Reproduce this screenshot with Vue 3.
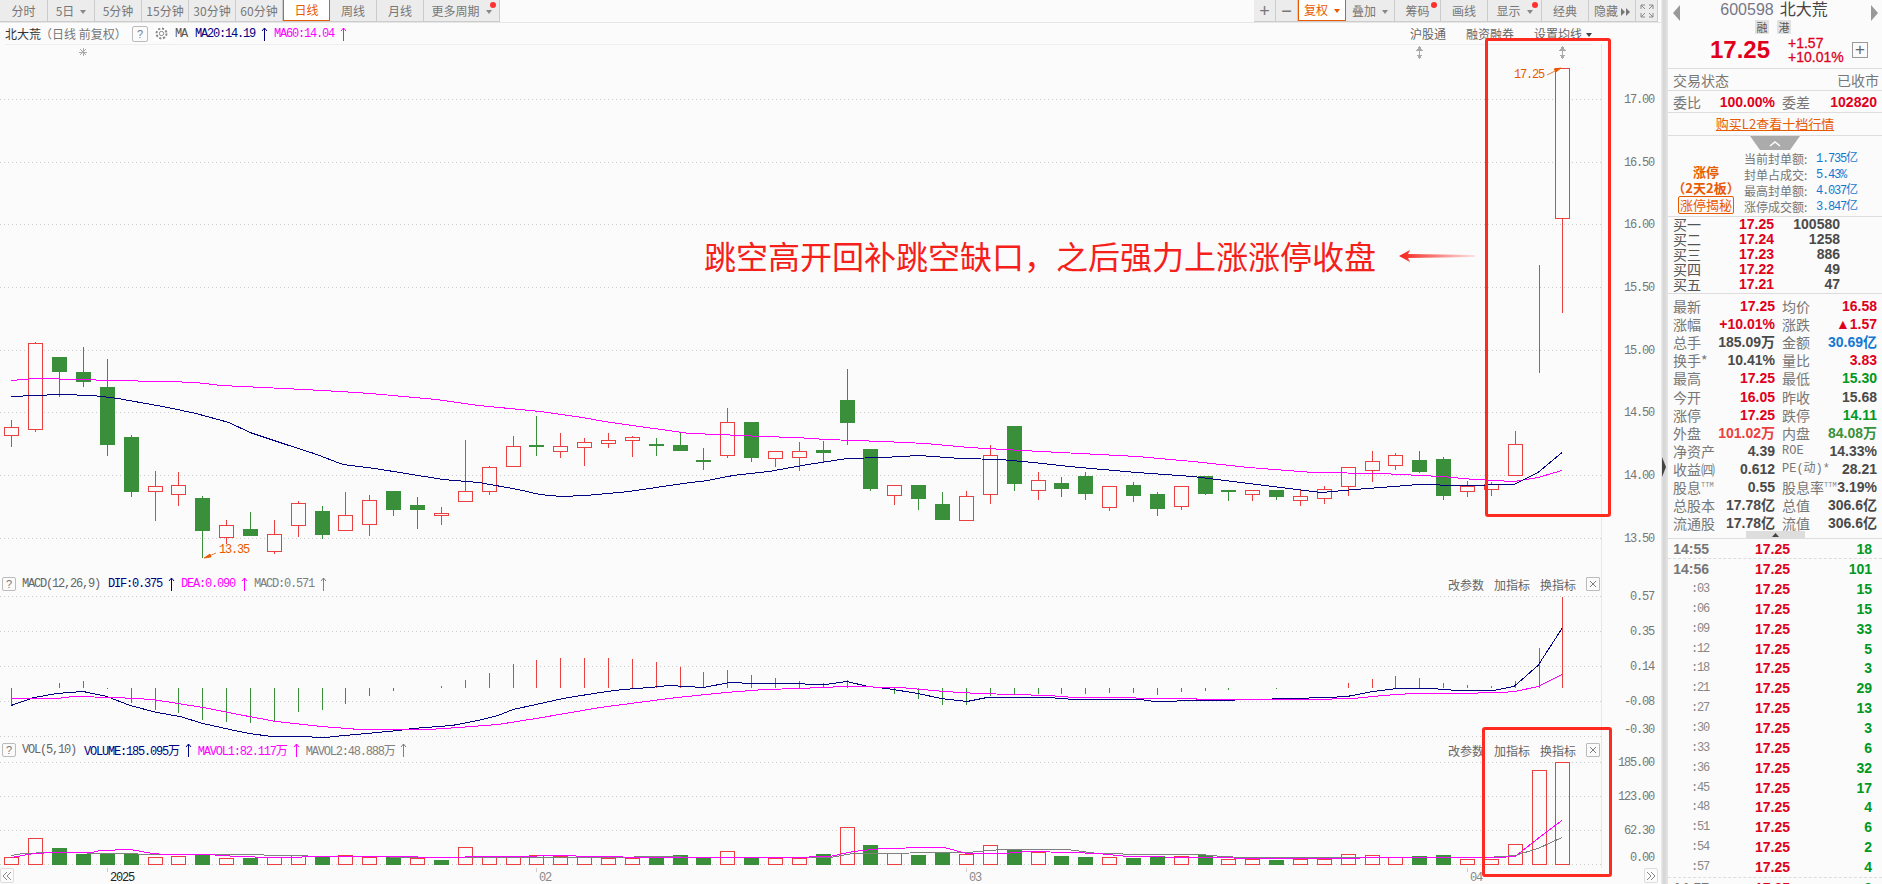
<script setup>
const RED = '#ec4040'
const GREEN = '#398f3a'
const slotX = (i) => Math.round(11.4 + 23.863 * i) + 0.5
const px = (v) => Math.round(v) + 0.5

// candle table: kind, high, top, bottom, low (page pixels)
const rawCandles = [
  ['u',419,427,435,446],['u',341,343,429,431],['d',357,357,371,396],['d',346,372,381,386],['d',358,387,444,455],
  ['d',434,437,491,496],['u',470,486,491,520],['u',471,485,494,505],['d',495,498,530,557],['u',519,525,537,543],
  ['d',511,529,535,535],['u',519,534,551,553],['u',500,503,525,536],['d',505,511,534,538],['u',491,515,530,530],
  ['u',494,500,524,535],['d',490,491,509,515],['d',496,505,509,528],['u',506,513,515,524],['u',439,491,501,501],
  ['u',465,467,491,494],['u',435,446,466,466],['d',415,445,446,455],['u',432,446,451,457],['u',437,442,447,465],
  ['u',432,440,443,447],['u',435,437,440,456],['d',437,444,445,455],['d',432,445,450,450],['d',447,460,461,469],
  ['u',407,422,455,457],['d',422,422,457,461],['u',451,451,458,466],['u',441,451,457,470],['d',440,450,452,461],
  ['d',368,400,422,444],['d',449,449,488,490],['u',484,485,495,504],['d',484,485,498,509],['d',491,504,519,519],
  ['u',490,496,520,520],['u',444,455,494,503],['d',426,426,483,490],['u',471,480,490,499],['d',476,483,488,496],
  ['d',471,476,493,499],['u',485,486,507,510],['d',481,485,495,501],['d',491,494,508,515],['u',486,486,506,509],
  ['d',476,476,493,494],['d',490,490,491,500],['u',489,490,494,500],['d',490,490,496,499],['u',489,496,500,505],
  ['u',485,489,498,503],['u',467,467,486,495],['u',450,461,470,481],['u',452,455,465,469],['d',450,460,471,472],
  ['d',456,459,495,499],['u',480,486,491,496],['u',481,484,489,495],['u',430,444,475,475],['u',264,264,264,372],
  ['u',68,68,218,312]
]

const candles = rawCandles.map(([kind, hi, top, bot, lo], i) => ({
  key: i,
  x: slotX(i),
  color: kind === 'u' ? RED : GREEN,
  up: kind === 'u',
  hi: px(hi),
  top: px(top),
  bot: px(bot),
  lo: px(lo),
  height: Math.max(px(bot) - px(top), 0)
}))

const toPoints = (rows) => rows.map(([x, y]) => `${x},${y + 0.5}`).join(' ')

const ma60 = toPoints([[11,380],[35,378],[84,379],[108,380],[167,381],[196,382],[221,385],[263,387],[304,389],[357,392],[382,394],[436,399],[479,405],[540,411],[576,416],[611,422],[654,428],[690,433],[719,434],[761,436],[797,437],[826,439],[883,441],[926,443],[969,447],[1022,450],[1080,453],[1137,456],[1193,461],[1249,467],[1313,472],[1381,473],[1441,476],[1475,479],[1514,481],[1538,477],[1562,470]])
const ma20 = toPoints([[11,396],[60,394],[93,395],[118,398],[168,407],[196,413],[229,422],[250,432],[286,444],[314,453],[343,464],[375,468],[443,479],[479,482],[518,489],[540,494],[561,496],[586,495],[629,491],[683,483],[708,480],[733,475],[769,471],[808,464],[847,458],[883,457],[919,455],[961,458],[1001,459],[1033,462],[1069,466],[1080,467],[1137,472],[1193,476],[1249,483],[1321,492],[1355,489],[1419,484],[1460,485],[1514,484],[1538,472],[1562,452]])

// values read from the 3x crops, turned back into page pixels
const sec = (x0, sx, rows) => rows.map(([x, z]) => [Math.round(x0 + x / sx), Math.round(570 + z / 3)])
const S1 = 2.613
const difLine = toPoints([
  ...sec(0, S1, [[30,405],[90,382],[150,370],[218,364],[280,378],[340,405],[410,425],[470,437],[530,458],[600,478],[650,490],[710,498],[780,498],[850,502],[900,496],[960,488],[1040,481],[1080,475],[1180,465],[1250,450],[1300,435],[1340,418],[1400,402],[1470,385]]),
  ...sec(600, S1, [[0,367],[60,356],[130,351],[180,346],[270,350],[340,337],[400,340],[480,340],[590,343],[645,333],[700,349],[750,355],[830,370],[890,385],[960,392],[1010,382],[1170,382],[1240,386],[1410,388],[1450,394],[1568,391]]),
  ...sec(1200, 3, [[48,390],[385,382],[440,378],[520,363],[590,355],[695,355],[770,360],[880,360],[943,348],[1015,285],[1087,175]])
])
const deaLine = toPoints([
  ...sec(0, S1, [[30,385],[150,383],[190,379],[300,380],[400,388],[530,412],[650,437],[720,452],[840,468],[940,478],[1120,478],[1200,472],[1300,462],[1400,445]]),
  ...sec(600, S1, [[0,411],[100,397],[200,382],[330,367],[430,358],[520,355],[640,349],[785,350],[900,362],[990,370],[1170,374],[1240,380],[1370,380],[1430,385],[1550,385]]),
  ...sec(1200, 3, [[0,388],[335,388],[460,383],[550,376],[640,370],[765,369],[905,367],[945,363],[1015,347],[1087,313]])
])
const macdBars = [405,353,338,333,357,400,420,430,450,456,459,452,426,420,402,378,363,353,347,330,308,282,270,264,264,264,267,276,291,306,300,315,324,333,339,330,355,372,387,405,405,378,375,372,372,372,369,369,375,366,362,360,355,357,355,353,339,327,318,324,339,345,348,333,235,82]
  .map((z, i) => ({ key: i, x: slotX(i), y: Math.round(570 + z / 3), color: z < 355 ? RED : GREEN }))
  .filter((b) => b.y !== 688)

const volBars = [
  [1,862],[1,805],[0,834],[0,852],[0,848],[0,852],[1,862],[1,858],[0,852],[1,865],[0,864],[1,862],[1,855],[0,860],[1,854],[1,860],[0,860],[1,865],[0,870],[1,832],[1,862],[1,860],[1,854],[1,858],[1,858],
  [1,865],[1,865],[0,862],[0,856],[0,860],[1,844],[0,860],[1,865],[1,865],[0,852],[1,772],[0,825],[1,850],[0,855],[0,846],[1,853],[1,826],[0,840],[1,847],[0,858],[0,861],[1,862],[0,864],[0,858],[1,859],
  [0,854],[1,868],[1,868],[0,870],[1,866],[1,866],[1,853],[1,856],[1,862],[0,858],[0,856],[1,866],[1,868],[1,823],[1,601],[1,577]
].map(([up, z], i) => ({ key: i, x: slotX(i), up: !!up, y: px(570 + z / 3), height: px(864) - px(570 + z / 3) }))

const volMa1 = toPoints([
  ...sec(0, S1, [[30,862],[90,850],[140,846],[240,845],[260,841],[340,838],[400,850],[430,853],[540,853],[620,858],[710,860],[870,859],[940,857],[1060,857],[1120,860],[1180,861],[1250,858],[1370,858],[1440,854]]),
  ...sec(600, S1, [[0,859],[120,862],[300,862],[490,860],[600,858],[660,842],[740,835],[860,830],[900,830],[960,848],[1050,848],[1120,842],[1230,845],[1300,850],[1380,858]]),
  ...sec(1200, 3, [[0,862],[195,864],[410,864],[550,860],[770,860],[890,860],[945,857],[1015,805],[1087,750]])
])
const volMa2 = toPoints([
  ...sec(0, S1, [[30,855],[60,850],[130,847],[320,848],[400,851],[680,852],[700,856],[1120,860],[1180,862],[1200,860]]),
  ...sec(600, S1, [[0,860],[180,857],[240,860],[490,862],[600,860],[660,850],[960,845],[1050,838],[1220,838],[1300,848],[1430,853]]),
  ...sec(1200, 3, [[0,853],[70,858],[125,862],[860,862],[945,856],[1015,835],[1087,802]])
])

const priceGrid = [
  [99.5,'17.00'],[162.5,'16.50'],[224.5,'16.00'],[287.5,'15.50'],[350.5,'15.00'],[412.5,'14.50'],[475.5,'14.00'],[538.5,'13.50']
]
const macdGrid = [[596.5,'0.57'],[631.5,'0.35'],[666.5,'0.14'],[701.5,'-0.08'],[736.5,'']]
const volGrid = [[762.5,'185.00'],[796.5,'123.00'],[830.5,'62.30'],[864.5,'']]
const dates = [
  { label: '2025', tick: 107.5, x: 110, dark: true },
  { label: '02', tick: 536.5, x: 539 },
  { label: '03', tick: 966.5, x: 969 },
  { label: '04', tick: 1467.5, x: 1470 }
]

const leftTools = [
  { t: '分时', w: 48 }, { t: '5日', w: 47, caret: true }, { t: '5分钟', w: 47 }, { t: '15分钟', w: 47 }, { t: '30分钟', w: 47 },
  { t: '60分钟', w: 47 }, { t: '日线', w: 47, on: true }, { t: '周线', w: 47 }, { t: '月线', w: 47 }, { t: '更多周期', w: 76, caret: true, dot: true }
]
const rightTools = [
  { t: '+', w: 22, sign: true }, { t: '−', w: 22, sign: true }, { t: '复权', w: 48, on: true, caret: true }, { t: '叠加', w: 49, caret: true }, { t: '筹码', w: 46, dot: true },
  { t: '画线', w: 47 }, { t: '显示', w: 54, caret: true, dot: true }, { t: '经典', w: 47 }, { t: '隐藏', w: 47, more: true }
]

const maHead = [
  { text: 'MA20:14.19', color: '#000080' },
  { text: 'MA60:14.04', color: '#ff00ff' }
]
const macdHead = [
  { text: 'DIF:0.375', color: '#000080' },
  { text: 'DEA:0.090', color: '#ff00ff' },
  { text: 'MACD:0.571', color: '#808080' }
]
const volHead = [
  { text: 'VOLUME:185.095万', color: '#000080' },
  { text: 'MAVOL1:82.117万', color: '#ff00ff' },
  { text: 'MAVOL2:48.888万', color: '#808080' }
]

const sealRows = [
  ['当前封单额:', '1.735亿'], ['封单占成交:', '5.43%'], ['最高封单额:', '4.037亿'], ['涨停成交额:', '3.847亿']
]
const buyRows = [
  ['买一', '17.25', '100580'], ['买二', '17.24', '1258'], ['买三', '17.23', '886'], ['买四', '17.22', '49'], ['买五', '17.21', '47']
]
const stats = [
  ['最新', '17.25', 'r', '均价', '16.58', 'r'],
  ['涨幅', '+10.01%', 'r', '涨跌', '▲1.57', 'r'],
  ['总手', '185.09万', 'k', '金额', '30.69亿', 'b'],
  ['换手*', '10.41%', 'k', '量比', '3.83', 'r'],
  ['最高', '17.25', 'r', '最低', '15.30', 'g'],
  ['今开', '16.05', 'r', '昨收', '15.68', 'k'],
  ['涨停', '17.25', 'r', '跌停', '14.11', 'g'],
  ['外盘', '101.02万', 'lr', '内盘', '84.08万', 'lg'],
  ['净资产', '4.39', 'k', 'ROE', '14.33%', 'k'],
  ['收益㈣', '0.612', 'k', 'PE(动)*', '28.21', 'k'],
  ['股息', '0.55', 'k', '股息率', '3.19%', 'k', true],
  ['总股本', '17.78亿', 'k', '总值', '306.6亿', 'k'],
  ['流通股', '17.78亿', 'k', '流值', '306.6亿', 'k']
]
const ticks = [
  ['14:56', 101], [':03', 15], [':06', 15], [':09', 33], [':12', 5], [':18', 3], [':21', 29], [':27', 13],
  [':30', 3], [':33', 6], [':36', 32], [':45', 17], [':48', 4], [':51', 6], [':54', 2], [':57', 4]
]
</script>

<template>
  <div class="app">
    <main class="main">
      <header class="toolbar">
        <div class="tool-group">
          <button
            v-for="b in leftTools"
            :key="b.t"
            class="tool"
            :class="{ on: b.on }"
            :style="{ width: b.w + 'px' }"
          >
            {{ b.t }}<i v-if="b.caret" class="caret"></i><i v-if="b.dot" class="dot"></i>
          </button>
        </div>
        <div class="tool-group">
          <button
            v-for="b in rightTools"
            :key="b.t"
            class="tool"
            :class="{ on: b.on, sign: b.sign }"
            :style="{ width: b.w + 'px' }"
          >
            {{ b.t }}<i v-if="b.caret" class="caret"></i><i v-if="b.dot" class="dot"></i>
            <svg v-if="b.more" class="more" width="9" height="8" viewBox="0 0 9 8" fill="#777"><path d="M0 0l4 4-4 4zM5 0l4 4-4 4z" /></svg>
          </button>
          <button class="tool expand">
            <svg width="14" height="14" viewBox="0 0 14 14" fill="none" stroke="#888">
              <path d="M1 5V1h4M13 5V1H9M1 9v4h4M13 9v4H9M1 1l4 4M13 1L9 5M1 13l4-4M13 13L9 9" />
            </svg>
          </button>
        </div>
      </header>

      <section class="panel price-panel">
        <svg class="canvas" viewBox="0 23 1661 549" width="1661" height="549">
          <g class="grid">
            <line v-for="g in priceGrid" :key="g[0]" x1="0" x2="1604" :y1="g[0]" :y2="g[0]" />
          </g>
          <line class="axis" x1="1601.5" x2="1601.5" y1="44" y2="572" />
          <text v-for="g in priceGrid" :key="g[1]" class="axis-label" x="1654" :y="g[0] + 3" text-anchor="end">{{ g[1] }}</text>
          <g v-for="c in candles" :key="c.key" :stroke="c.color" shape-rendering="crispEdges">
            <line :x1="c.x" :x2="c.x" :y1="c.hi" :y2="c.top" />
            <line :x1="c.x" :x2="c.x" :y1="c.bot" :y2="c.lo" />
            <rect v-if="c.up" :x="c.x - 7" :y="c.top" width="14" :height="c.height" fill="#fbfbfb" />
            <rect v-else :x="c.x - 7" :y="c.top" width="14" :height="c.height" :fill="c.color" />
          </g>
          <polyline class="ln" stroke="#ff00ff" :points="ma60" />
          <polyline class="ln" stroke="#000080" :points="ma20" />
          <g class="mark">
            <text x="1514" y="78">17.25</text>
            <path d="M1547 75l8-4M1561 68l-7 1 2 3z" />
            <text x="219" y="553">13.35</text>
            <path d="M216 553l-7 3M204 558l6-4 1 3z" />
          </g>
          <g class="pin">
            <path d="M1419.5 49v7M1417 50l2.5-3 2.5 3zM1417 55l2.5 3 2.5-3z" />
            <path d="M1562.5 49v7M1560 50l2.5-3 2.5 3zM1560 55l2.5 3 2.5-3z" />
            <path d="M83 48v8M79 52h8M80 49l6 6M86 49l-6 6" />
          </g>
        </svg>
        <div class="title-row">
          <span class="stock">北大荒</span>
          <span class="period">（日线 前复权）</span>
          <span class="q-box">?</span>
          <svg class="gear" width="15" height="15" viewBox="0 0 15 15" fill="none" stroke="#888">
            <circle cx="7.5" cy="7.5" r="2.2" />
            <circle cx="7.5" cy="7.5" r="5" stroke-width="2" stroke-dasharray="2.2 1.7" />
          </svg>
          <span class="mono ma-tag">MA</span>
          <span v-for="m in maHead" :key="m.text" class="mono head-item" :style="{ color: m.color }">
            {{ m.text }}
            <svg class="up" width="7" height="14" viewBox="0 0 7 14" fill="none" stroke="currentColor"><path d="M3.5 14V1M1 4l2.5-3L6 4" /></svg>
          </span>
          <span class="right-links">
            <span>沪股通</span><span>融资融券</span><span>设置均线<i class="caret dark"></i></span>
          </span>
        </div>
      </section>

      <section class="panel macd-panel">
        <svg class="canvas" viewBox="0 572 1661 166" width="1661" height="166">
          <g class="grid">
            <line v-for="g in macdGrid" :key="g[0]" x1="0" x2="1604" :y1="g[0]" :y2="g[0]" />
          </g>
          <line class="axis" x1="1601.5" x2="1601.5" y1="572" y2="738" />
          <text v-for="g in macdGrid" :key="g[0]" class="axis-label" x="1654" :y="g[0] + 3" text-anchor="end">{{ g[1] }}</text>
          <text class="axis-label" x="1654" y="733" text-anchor="end">-0.30</text>
          <line
            v-for="b in macdBars"
            :key="b.key"
            :x1="b.x"
            :x2="b.x"
            y1="688"
            :y2="b.y"
            :stroke="b.color"
            shape-rendering="crispEdges"
          />
          <polyline class="ln" stroke="#000080" :points="difLine" />
          <polyline class="ln" stroke="#ff00ff" :points="deaLine" />
        </svg>
        <div class="ind-head">
          <span class="q-box small">?</span>
          <span class="mono ind-name">MACD(12,26,9)</span>
          <span v-for="m in macdHead" :key="m.text" class="mono head-item" :style="{ color: m.color }">
            {{ m.text }}
            <svg class="up" width="7" height="14" viewBox="0 0 7 14" fill="none" stroke="currentColor"><path d="M3.5 14V1M1 4l2.5-3L6 4" /></svg>
          </span>
          <span class="ind-tools">
            <span>改参数</span><span>加指标</span><span>换指标</span>
            <svg class="close" width="14" height="14" viewBox="0 0 14 14" fill="none" stroke="#666"><path d="M3.5 3.5l7 7M10.5 3.5l-7 7" /></svg>
          </span>
        </div>
      </section>

      <section class="panel vol-panel">
        <svg class="canvas" viewBox="0 738 1661 130" width="1661" height="130">
          <g class="grid">
            <line v-for="g in volGrid" :key="g[0]" x1="0" x2="1604" :y1="g[0]" :y2="g[0]" />
          </g>
          <line class="axis" x1="1601.5" x2="1601.5" y1="738" y2="868" />
          <text v-for="g in volGrid" :key="g[0]" class="axis-label" x="1654" :y="g[0] + 3" text-anchor="end">{{ g[1] }}</text>
          <text class="axis-label" x="1654" y="861" text-anchor="end">0.00</text>
          <g shape-rendering="crispEdges">
            <template v-for="b in volBars" :key="b.key">
              <rect v-if="b.up" :x="b.x - 7" :y="b.y" width="14" :height="b.height" fill="none" :stroke="RED" />
              <rect v-else :x="b.x - 7" :y="b.y" width="14" :height="b.height" :fill="GREEN" :stroke="GREEN" />
            </template>
          </g>
          <polyline class="ln" stroke="#808080" :points="volMa2" />
          <polyline class="ln" stroke="#ff00ff" :points="volMa1" />
        </svg>
        <div class="ind-head">
          <span class="q-box small">?</span>
          <span class="mono ind-name vol-name">VOL(5,10)</span>
          <span v-for="m in volHead" :key="m.text" class="mono head-item" :style="{ color: m.color }">
            {{ m.text }}
            <svg class="up" width="7" height="14" viewBox="0 0 7 14" fill="none" stroke="currentColor"><path d="M3.5 14V1M1 4l2.5-3L6 4" /></svg>
          </span>
          <span class="ind-tools">
            <span>改参数</span><span>加指标</span><span>换指标</span>
            <svg class="close" width="14" height="14" viewBox="0 0 14 14" fill="none" stroke="#666"><path d="M3.5 3.5l7 7M10.5 3.5l-7 7" /></svg>
          </span>
        </div>
      </section>

      <footer class="date-row">
        <button class="nav-btn left">
          <svg width="10" height="10" viewBox="0 0 10 10" fill="none" stroke="#888"><path d="M5 1L1 5l4 4M9 1L5 5l4 4" /></svg>
        </button>
        <svg class="canvas" viewBox="0 868 1661 16" width="1661" height="16">
          <template v-for="d in dates" :key="d.label">
            <line :x1="d.tick" :x2="d.tick" y1="868" y2="872" stroke="#ccc" />
            <text class="date-label" :class="{ dark: d.dark }" :x="d.x" y="881">{{ d.label }}</text>
          </template>
        </svg>
        <button class="nav-btn right">
          <svg width="10" height="10" viewBox="0 0 10 10" fill="none" stroke="#888"><path d="M1 1l4 4-4 4M5 1l4 4-4 4" /></svg>
        </button>
      </footer>

      <!-- hand-drawn markup on top of the chart -->
      <div class="note">跳空高开回补跳空缺口，之后强力上涨涨停收盘</div>
      <svg class="note-arrow" width="76" height="14" viewBox="0 0 76 14">
        <defs>
          <linearGradient id="tail">
            <stop offset="0" stop-color="#f5201a" />
            <stop offset="1" stop-color="#f5201a" stop-opacity="0.1" />
          </linearGradient>
        </defs>
        <path d="M0 7L11 1 9 5 76 6v2L9 9l2 4z" fill="url(#tail)" />
      </svg>
      <div class="red-box price-box"></div>
      <div class="red-box vol-box"></div>
    </main>

    <div class="splitter"><i></i></div>

    <aside class="side">
      <div class="quote-head">
        <i class="side-arrow prev"></i>
        <i class="side-arrow next"></i>
        <div class="code-row"><span class="code">600598</span><span class="name">北大荒</span></div>
        <div class="badges"><span>融</span><span>港</span></div>
        <div class="price-row">
          <span class="last">17.25</span>
          <span class="changes"><span>+1.57</span><span>+10.01%</span></span>
          <span class="plus">+</span>
        </div>
      </div>
      <div class="info-row">
        <span class="label">交易状态</span><span class="label">已收市</span>
      </div>
      <div class="stat-row ratio">
        <div class="stat"><span class="label">委比</span><b class="red">100.00%</b></div>
        <div class="stat"><span class="label">委差</span><b class="red">102820</b></div>
      </div>
      <div class="buy-l2"><a>购买L2查看十档行情</a></div>

      <div class="seal">
        <svg class="fold" width="50" height="14" viewBox="0 0 50 14">
          <path d="M0 0h50l-10 14H10z" fill="#ababab" />
          <path d="M20 10l5-4 5 4" fill="none" stroke="#fff" stroke-width="1.5" />
        </svg>
        <div class="seal-left">
          <b>涨停</b>
          <b>（2天2板）</b>
          <span class="seal-btn">涨停揭秘</span>
        </div>
        <div class="seal-right">
          <div v-for="r in sealRows" :key="r[0]" class="seal-row">
            <span>{{ r[0] }}</span><span class="seal-val">{{ r[1] }}</span>
          </div>
        </div>
      </div>

      <div class="buy-list">
        <div v-for="r in buyRows" :key="r[0]" class="buy-row">
          <span class="buy-label">{{ r[0] }}</span>
          <b class="red">{{ r[1] }}</b>
          <b class="k">{{ r[2] }}</b>
        </div>
      </div>

      <div class="stats">
        <div v-for="s in stats" :key="s[0]" class="stat-row">
          <div class="stat">
            <span class="label">{{ s[0] }}<sup v-if="s[6]">TTM</sup></span><b :class="s[2]">{{ s[1] }}</b>
          </div>
          <div class="stat">
            <span class="label" :class="{ latin: /^[A-Z]/.test(s[3]) }">{{ s[3] }}<sup v-if="s[6]">TTM</sup></span><b :class="s[5]">{{ s[4] }}</b>
          </div>
        </div>
      </div>
      <div class="stats-foot">
        <i><svg width="7" height="4" viewBox="0 0 7 4" fill="#444"><path d="M0 4l3.5-4L7 4z" /></svg></i>
      </div>

      <div class="tick-row first">
        <b class="time">14:55</b><b class="red">17.25</b><b class="g">18</b>
      </div>
      <div class="tick-block">
        <div v-for="t in ticks" :key="t[0]" class="tick-row">
          <b v-if="t[0].length > 3" class="time">{{ t[0] }}</b>
          <span v-else class="sec">{{ t[0] }}</span>
          <b class="red">17.25</b><b class="g">{{ t[1] }}</b>
        </div>
      </div>
      <div class="tick-row next-min">
        <b class="time">14:57</b><b class="red">17.25</b><b class="g">3</b>
      </div>
    </aside>
  </div>
</template>

<style scoped>
.app {
  --cjk: "Noto Sans CJK SC", "Liberation Sans", sans-serif;
  --mono: "Liberation Mono", "Noto Sans CJK SC", monospace;
  --num: "Liberation Sans", "Noto Sans CJK SC", sans-serif;
  display: flex;
  width: 1882px;
  height: 884px;
  overflow: hidden;
  background: #fbfbfb;
  font-family: var(--cjk);
  font-size: 12px;
  color: #666;
}
.main {
  position: relative;
  width: 1661px;
  flex: none;
}
.toolbar {
  display: flex;
  justify-content: space-between;
  height: 22px;
  border-bottom: 1px solid #e6e6e6;
  padding-right: 3px;
  box-sizing: content-box;
}
.tool-group {
  display: flex;
  height: 21px;
  background: #ececec;
  border-bottom: 1px solid #ccc;
}
.tool {
  position: relative;
  padding: 0;
  border: 0;
  border-right: 1px solid #ccc;
  background: transparent;
  font: 12px/20px var(--cjk);
  color: #777;
  white-space: nowrap;
}
.tool.sign {
  font: 18px/20px var(--num);
}
.tool.on {
  background: #fff;
  color: #e85a00;
  border: 1px solid #e85a00;
  border-top: 0;
}
.tool.expand {
  width: 22px;
  display: flex;
  align-items: center;
  justify-content: center;
}
.caret {
  display: inline-block;
  margin-left: 6px;
  vertical-align: 2px;
  border: 3px solid transparent;
  border-top: 4px solid #888;
  border-bottom: 0;
}
.tool.on .caret {
  border-top-color: #e85a00;
}
.caret.dark {
  border-top-color: #444;
  margin-left: 4px;
}
.dot {
  position: absolute;
  top: 2px;
  right: 3px;
  width: 6px;
  height: 6px;
  border-radius: 50%;
  background: #ff3030;
}
.more {
  margin-left: 3px;
}
.panel {
  position: relative;
}
.price-panel {
  height: 549px;
}
.macd-panel {
  height: 166px;
  border-top: 0;
}
.vol-panel {
  height: 130px;
}
.canvas {
  position: absolute;
  left: 0;
  top: 0;
}
.grid line {
  stroke: #ccc;
  stroke-dasharray: 1 3;
  shape-rendering: crispEdges;
}
.axis {
  stroke: #e8e8e8;
  shape-rendering: crispEdges;
}
.axis-label {
  font: 12px var(--mono);
  letter-spacing: -1.2px;
  fill: #777;
}
.ln {
  fill: none;
  stroke-width: 1;
  shape-rendering: crispEdges;
}
.mark text {
  font: 12px var(--mono);
  letter-spacing: -1.2px;
  fill: #e85a00;
}
.mark path {
  fill: #e85a00;
  stroke: #e85a00;
  stroke-width: 0.8;
}
.pin path {
  stroke: #aaa;
  fill: #aaa;
  shape-rendering: crispEdges;
}
.title-row,
.ind-head {
  position: relative;
  display: flex;
  align-items: center;
  height: 21px;
  margin-right: 69px;
  white-space: nowrap;
}
.title-row {
  margin-left: 5px;
  border-bottom: 1px solid #eee;
  color: #777;
}
.stock {
  color: #333;
}
.period {
  width: 92px;
  margin-left: -1px;
}
.q-box {
  width: 14px;
  height: 14px;
  border: 1px solid #bbb;
  border-radius: 2px;
  font: 11px/14px var(--num);
  text-align: center;
  color: #777;
}
.q-box.small {
  margin-left: 2px;
  width: 12px;
  height: 12px;
  line-height: 12px;
}
.gear {
  margin-left: 6px;
  background: #fff;
}
.mono {
  font: 12px var(--mono);
  letter-spacing: -1.2px;
}
.ma-tag {
  margin-left: 6px;
  width: 20px;
  color: #555;
}
.head-item {
  display: inline-flex;
  align-items: center;
  gap: 6px;
  margin-right: 6px;
}
.up {
  flex: none;
}
.right-links {
  display: flex;
  gap: 20px;
  margin-left: auto;
  color: #666;
  background: #fbfbfb;
}
.ind-head {
  margin-right: 61px;
  height: 24px;
}
.ind-name {
  margin-left: 6px;
  width: 86px;
  color: #666;
}
.ind-name.vol-name {
  width: 62px;
}
.ind-tools {
  display: flex;
  align-items: center;
  gap: 10px;
  margin-left: auto;
  color: #666;
}
.close {
  box-sizing: border-box;
  border: 1px solid #bbb;
  border-radius: 1px;
}
.date-row {
  position: relative;
  height: 16px;
}
.date-label {
  font: 12px var(--mono);
  letter-spacing: -1.2px;
  fill: #888;
}
.date-label.dark {
  fill: #222;
}
.nav-btn {
  position: absolute;
  z-index: 1;
  top: 0;
  display: flex;
  align-items: center;
  justify-content: center;
  width: 14px;
  height: 15px;
  padding: 0;
  border: 1px solid #ddd;
  border-radius: 2px;
  background: #fbfbfb;
}
.nav-btn.left {
  left: 0;
}
.nav-btn.right {
  right: 3px;
}
.note {
  position: absolute;
  left: 704px;
  top: 231px;
  font: 32px/48px var(--cjk);
  color: #f5201a;
  white-space: nowrap;
}
.note-arrow {
  position: absolute;
  left: 1399px;
  top: 249px;
}
.red-box {
  position: absolute;
  box-sizing: border-box;
  border: 3px solid #ff2a20;
  border-radius: 3px;
}
.price-box {
  left: 1485px;
  top: 38px;
  width: 126px;
  height: 479px;
}
.vol-box {
  left: 1482px;
  top: 727px;
  width: 130px;
  height: 150px;
}
.splitter {
  position: relative;
  width: 7px;
  flex: none;
  background: linear-gradient(90deg, #ececec, #d4d4d4 40%, #e6e6e6);
}
.splitter i {
  position: absolute;
  left: 1px;
  top: 457px;
  border: 10px solid transparent;
  border-left: 4px solid #444;
  border-right: 0;
}
.side {
  width: 214px;
  flex: none;
  overflow: hidden;
}
.quote-head {
  position: relative;
  height: 68px;
  border-bottom: 1px solid #ddd;
  box-sizing: content-box;
}
.side-arrow {
  position: absolute;
  top: 5px;
  border: 8px solid transparent;
}
.prev {
  left: 5px;
  border-right: 7px solid #999;
  border-left: 0;
}
.next {
  right: 4px;
  border-left: 7px solid #999;
  border-right: 0;
}
.code-row {
  display: flex;
  justify-content: center;
  gap: 6px;
  padding-right: 2px;
  height: 20px;
  font: 16px/20px var(--num);
}
.code {
  color: #778;
}
.name {
  color: #444;
}
.badges {
  display: flex;
  justify-content: center;
  gap: 8px;
  height: 14px;
  padding-right: 4px;
}
.badges span {
  width: 14px;
  height: 14px;
  background: #e2e2e2;
  font-size: 11px;
  line-height: 14px;
  text-align: center;
  color: #555;
}
.price-row {
  display: flex;
  align-items: center;
  height: 32px;
  padding-left: 42px;
}
.last {
  width: 78px;
  font: bold 24px/28px var(--num);
  color: #e0001c;
}
.changes {
  display: flex;
  flex-direction: column;
  width: 64px;
  font: 14px/14px var(--num);
  color: #e0001c;
  -webkit-text-stroke: 0.3px #e0001c;
}
.plus {
  width: 14px;
  height: 14px;
  border: 1px solid #999;
  font: 17px/13px var(--num);
  text-align: center;
  color: #666;
}
.info-row {
  display: flex;
  justify-content: space-between;
  align-items: center;
  height: 21px;
  padding: 0 3px 0 5px;
  border-bottom: 1px solid #ddd;
}
.label {
  font-size: 14px;
  line-height: 18px;
  color: #777;
  white-space: nowrap;
}
.label.latin {
  font: 12px/18px var(--mono);
}
.label sup {
  font: 7px/7px var(--mono);
  vertical-align: 6px;
  color: #888;
}
.red {
  color: #e0001c;
}
.k {
  color: #4a4a4a;
}
.r {
  color: #e0001c;
}
.g {
  color: #00981e;
}
.b {
  color: #1478d2;
}
.lr {
  color: #ec4040;
}
.lg {
  color: #3a913a;
}
.buy-l2 {
  height: 22px;
  border-bottom: 1px solid #ddd;
  font-size: 13px;
  line-height: 21px;
  text-align: center;
  color: #e85a00;
}
.buy-l2 a {
  text-decoration: underline;
}
.seal {
  position: relative;
  display: flex;
  height: 80px;
  border-bottom: 1px solid #ddd;
  box-sizing: content-box;
}
.fold {
  position: absolute;
  left: 82px;
  top: 0;
}
.seal-left {
  display: flex;
  flex-direction: column;
  align-items: center;
  width: 76px;
  padding-top: 28px;
  color: #e85a00;
  font-size: 13px;
  line-height: 16px;
}
.seal-btn {
  width: 54px;
  height: 16px;
  border: 1px solid #e85a00;
  border-radius: 2px;
  font-size: 13px;
  line-height: 16px;
  text-align: center;
  white-space: nowrap;
}
.seal-right {
  padding-top: 15px;
}
.seal-row {
  display: flex;
  height: 16px;
  font-size: 12px;
  line-height: 16px;
  color: #777;
}
.seal-row > span:first-child {
  width: 72px;
}
.seal-val {
  font: 12px/16px var(--mono);
  letter-spacing: -1.2px;
  color: #1478d2;
}
.buy-list {
  height: 76px;
  padding: 0 0 0 5px;
  border-bottom: 1px solid #ddd;
}
.buy-row {
  display: grid;
  grid-template-columns: 35px 66px 66px;
  height: 15px;
  line-height: 15px;
}
.buy-label {
  font-size: 14px;
  color: #555;
}
.buy-row b {
  font: bold 14px/15px var(--num);
  text-align: right;
}
.stats {
  padding: 3px 5px 0;
}
.stat-row {
  display: grid;
  grid-template-columns: 102px 95px;
  gap: 7px;
  height: 18.1px;
}
.stat-row.ratio {
  height: 21px;
  padding-left: 5px;
  border-bottom: 1px solid #ddd;
}
.stat {
  display: flex;
  justify-content: space-between;
  align-items: center;
  white-space: nowrap;
}
.stat b {
  font: bold 14px/18px var(--num);
}
.stats-foot {
  position: relative;
  height: 7px;
  margin-top: -1px;
  border-bottom: 1px solid #ddd;
}
.stats-foot i {
  position: absolute;
  left: 78px;
  top: 0;
  display: flex;
  justify-content: center;
  align-items: center;
  width: 59px;
  height: 7px;
  background: #ddd;
}
.tick-row {
  display: grid;
  grid-template-columns: 36px 81px 82px;
  padding-left: 5px;
  height: 19.85px;
  font: bold 14px/20px var(--num);
  text-align: right;
}
.tick-row.first {
  height: 19px;
}
.tick-block {
  border-top: 1px dashed #ddd;
  border-bottom: 1px dashed #ddd;
}
.time {
  color: #777;
}
.sec {
  font: 12px/20px var(--mono);
  letter-spacing: -1.2px;
  color: #888;
}
</style>

<style>
html,
body {
  margin: 0;
  overflow: hidden;
}
</style>
